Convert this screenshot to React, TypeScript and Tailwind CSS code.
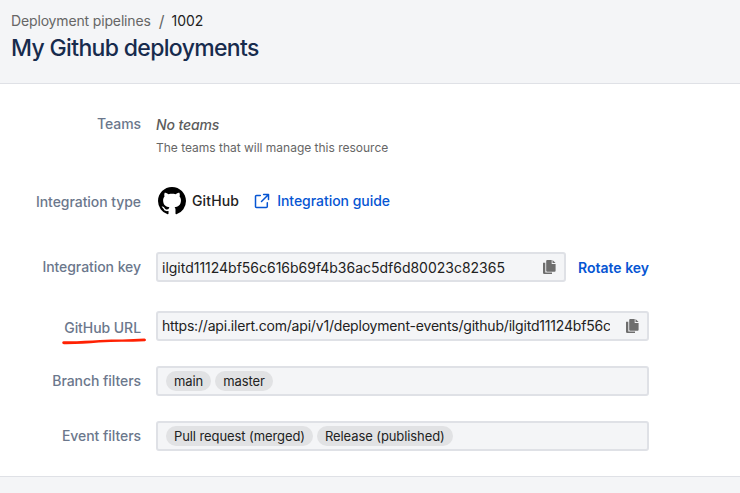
import type { ReactNode } from "react";

function Row({ label, className, labelClass = "", children }: { label: string; className: string; labelClass?: string; children: ReactNode }) {
  return (
    <div className={`flex ${className}`}>
      <div className={`w-[141px] shrink-0 text-right text-[14px] leading-5 font-medium tracking-[-0.06px] text-[#6b778c] ${labelClass}`}>
        {label}
      </div>
      <div className="ml-[15px] flex min-w-0">{children}</div>
    </div>
  );
}

function CopyIcon() {
  return (
    <svg width="13" height="15" viewBox="0 0 13 15" className="shrink-0" fill="#6e6e6e">
      <path d="M0 2.700H2.300V12.500H9V14H1.300Q0 14 0 12.800Z" />
      <path d="M4.200 0H8.700V3.900H12.600V10.700Q12.600 11.700 11.600 11.700H4.200Q3.200 11.700 3.200 10.700V1Q3.200 0 4.200 0Z" />
      <path d="M9.500 0L12.600 3.100H9.500Z" />
    </svg>
  );
}

function Field({ value, className, textClass }: { value: string; className: string; textClass: string }) {
  return (
    <div className={`flex h-[30px] items-center rounded-[3px] border-2 border-[#dfe1e6] bg-[#f4f5f7] pl-1 ${className}`}>
      <div className={`min-w-0 flex-1 overflow-hidden text-[14px] leading-5 whitespace-nowrap text-[#222] ${textClass}`}>{value}</div>
      <div className="mr-2 ml-4"><CopyIcon /></div>
    </div>
  );
}

function Tags({ items }: { items: string[] }) {
  return (
    <div className="flex h-[30px] w-[493px] items-center gap-1 rounded-[3px] border-2 border-[#dfe1e6] bg-[#f4f5f7] pl-2">
      {items.map((item) => (
        <span key={item} className="h-5 rounded-full bg-[#e1e2e4] px-2 text-[13px] leading-5 tracking-[-0.09px] text-[#222]">{item}</span>
      ))}
    </div>
  );
}

export default function App() {
  return (
    <div className="flex h-[493px] w-[740px] flex-col overflow-hidden bg-[#f4f5f7] font-[Inter,sans-serif]">
      <header className="h-[84px] shrink-0 border-b border-[#dfe1e6] pt-[11px] pl-[11px]">
        <div className="flex text-[14px] leading-5">
          <span className="tracking-[-0.15px] text-[#666]">Deployment pipelines</span>
          <span className="mr-[7px] ml-2 text-[16px] text-[#666]">/</span>
          <span className="text-[#222]">1002</span>
        </div>
        <h1 className="mt-[3px] text-[23px] leading-7 font-medium tracking-[-0.66px] text-[#172b4d]">My Github deployments</h1>
      </header>
      <main className="h-[393px] shrink-0 border-b border-[#dfe1e6] bg-white">
        <Row label="Teams" className="h-[97px] pt-[30px]">
          <div>
            <div className="mt-[1px] text-[14px] leading-5 font-medium tracking-[-0.12px] text-[#5c5c5c] italic">No teams</div>
            <div className="mt-[5px] text-[12px] leading-4 tracking-[-0.01px] text-[#666]">The teams that will manage this resource</div>
          </div>
        </Row>
        <Row label="Integration type" className="h-[71px] pt-[6px]" labelClass="pt-[5px]">
          <div className="flex h-7 items-center pl-[2px] text-[14px] font-medium">
            <svg width="28" height="28" viewBox="0 0 16 16" fill="#000">
              <path d="M8 0c4.420 0 8 3.580 8 8a8.013 8.013 0 0 1-5.450 7.590c-.4.080-.55-.17-.55-.38 0-.27.010-1.130.010-2.200 0-.75-.25-1.230-.54-1.480 1.780-.2 3.650-.88 3.650-3.950 0-.88-.31-1.590-.82-2.150.080-.2.360-1.020-.080-2.120 0 0-.67-.22-2.200.82-.64-.18-1.320-.27-2-.27-.68 0-1.360.090-2 .27-1.530-1.030-2.200-.82-2.200-.82-.44 1.100-.16 1.920-.080 2.120-.51.560-.82 1.280-.82 2.150 0 3.060 1.860 3.750 3.640 3.950-.23.200-.44.550-.51 1.070-.46.210-1.610.550-2.330-.66-.15-.24-.6-.83-1.230-.82-.67.010-.27.380.010.530.34.190.730.900.820 1.130.160.450.680 1.310 2.690.940 0 .67.010 1.300.010 1.490 0 .21-.15.450-.55.380A7.995 7.995 0 0 1 0 8c0-4.420 3.580-8 8-8Z" />
            </svg>
            <span className="ml-[6px] pb-[1px] tracking-[0.15px] text-[#222]">GitHub</span>
            <a className="ml-[15px] flex items-center pb-px text-[#0655d3]">
              <svg width="16" height="16" viewBox="0 0 16 16" fill="none" stroke="currentColor" strokeWidth="1.5" strokeLinecap="round" strokeLinejoin="round">
                <path d="M6.300 2.500H2.500Q1.500 2.500 1.500 3.500V13.500Q1.500 14.500 2.500 14.500H12.300Q13.300 14.500 13.300 13.500V9.700M9.600 1.500H14.500V6.400M14 2L7.500 8.500" />
              </svg>
              <span className="ml-[7px] tracking-[-0.04px]">Integration guide</span>
            </a>
          </div>
        </Row>
        <Row label="Integration key" className="h-[59px]" labelClass="pt-[5px]">
          <Field value="ilgitd11124bf56c616b69f4b36ac5df6d80023c82365" className="w-[410px]" textClass="mt-[2px] tracking-[-0.01px]" />
          <a className="ml-3 pt-[6px] text-[14px] leading-5 font-semibold text-[#0655d3]">Rotate key</a>
        </Row>
        <Row label="GitHub URL" className="relative h-[55px]" labelClass="pt-[7px]">
          <Field value="https://api.ilert.com/api/v1/deployment-events/github/ilgitd11124bf56c616b69f4b36ac5df6d80023c82365" className="w-[493px]" textClass="tracking-[-0.19px]" />
          <svg className="absolute top-[26px] left-[60px]" width="90" height="10" viewBox="0 0 90 10" fill="#ff2103">
            <path d="M3.500 4.200C16 4.600 28 3.500 40 3C55 2.400 70 2.700 84.500 1.600C86.300 1.700 86.500 4 84.900 4.300C69 5.400 54 4.300 39 5.600C27 6.600 16 7.300 4 7.200C1.800 7.100 1.800 4.300 3.500 4.200Z" />
          </svg>
        </Row>
        <Row label="Branch filters" className="h-[55px]" labelClass="pt-[5px]"><Tags items={["main", "master"]} /></Row>
        <Row label="Event filters" className="h-[55px]" labelClass="pt-[5px]"><Tags items={["Pull request (merged)", "Release (published)"]} /></Row>
      </main>
    </div>
  );
}
